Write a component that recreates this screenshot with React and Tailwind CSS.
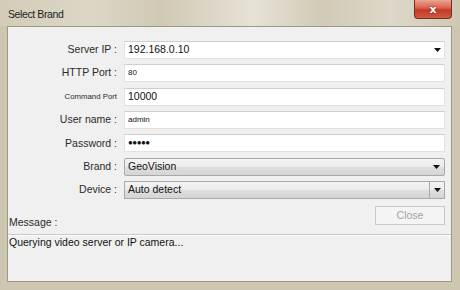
import React from "react";

const Arrow = () => (
  <svg width="7" height="4" viewBox="0 0 7 4" className="block">
    <path d="M0 0H7L3.5 4Z" fill="#111" />
  </svg>
);

function Label({ children, small }) {
  return (
    <div
      className={
        "flex items-center justify-end pr-[1px] text-[#2a2a2a] whitespace-nowrap " +
        (small ? "text-[7.8px]" : "text-[10.5px]")
      }
    >
      {children}
    </div>
  );
}

function TextBox({ value, small }) {
  return (
    <div
      className={
        "h-[18px] bg-white border border-[#e2e2e2] border-t-[#cfcfcf] flex items-center pl-[3px] text-[#111] " +
        (small ? "text-[8px]" : "text-[10.5px]")
      }
    >
      {value}
    </div>
  );
}

const grad =
  "bg-[linear-gradient(180deg,#f3f3f3_0%,#ebebeb_50%,#dedede_51%,#d5d5d5_100%)]";

export default function App() {
  return (
    <div
      className="w-[460px] h-[290px] relative overflow-hidden flex flex-col bg-[#cdc7b2]"
      style={{ fontFamily: '"Liberation Sans", Arial, sans-serif' }}
    >
      {/* title bar */}
      <div className="h-[26px] shrink-0 flex items-center pl-[8px] pt-[3px] bg-[linear-gradient(90deg,#d2ccb8_0%,#dcd7c7_20%,#cfc9b4_35%,#e6e2d6_55%,#d0cab6_70%,#ddd8c9_85%,#cec8b3_100%)]">
        <span className="text-[10.5px] tracking-[-0.4px] text-[#1d1d1d]">Select Brand</span>
      </div>
      {/* close X button */}
      <div className="absolute top-0 right-[8px] w-[38px] h-[19px] rounded-b-[4px] border border-t-0 border-[#7d2a1f] bg-[linear-gradient(180deg,#e9a493_0%,#d9604a_45%,#c23a26_55%,#cf5a43_100%)] flex items-center justify-center">
        <span
          className="text-white text-[11px] font-bold leading-none [text-shadow:0_0_2px_#6b1a10]"
          style={{ fontFamily: '"DejaVu Sans", sans-serif' }}
        >
          x
        </span>
      </div>

      {/* client area */}
      <div className="ml-[7px] mr-[8px] mb-[8px] flex-1 border border-[#9d9885] bg-[#f0f0f0] flex flex-col">
        <div className="pt-[14px] pr-[6px] grid grid-cols-[110px_1fr] gap-x-[6px] gap-y-[5.35px] auto-rows-[18px]">
          <Label>Server IP :</Label>
          <div className="h-[18px] bg-white border border-[#e2e2e2] border-t-[#cfcfcf] flex items-center pl-[3px] text-[10.5px] text-[#111]">
            <span className="flex-1">192.168.0.10</span>
            <span className="pr-[3px]"><Arrow /></span>
          </div>

          <Label>HTTP Port :</Label>
          <TextBox value="80" small />

          <Label small>Command Port</Label>
          <TextBox value="10000" />

          <Label>User name :</Label>
          <TextBox value="admin" small />

          <Label>Password :</Label>
          <div className="h-[18px] bg-white border border-[#e2e2e2] border-t-[#cfcfcf] flex items-center pl-[3px] text-[8px] font-bold text-[#111] tracking-[-0.5px]">
            ●●●●●
          </div>

          <Label>Brand :</Label>
          <div className={"h-[18px] rounded-[2px] border border-[#a9a9a9] flex items-center pl-[3px] text-[10.5px] text-[#111] " + grad}>
            <span className="flex-1">GeoVision</span>
            <span className="pr-[4px]"><Arrow /></span>
          </div>

          <Label>Device :</Label>
          <div className="h-[18px] flex border border-[#a9a9a9] bg-white">
            <div className={"flex-1 border-r border-[#a9a9a9] flex items-center pl-[3px] text-[10.5px] text-[#111] " + grad}>
              Auto detect
            </div>
            <div className={"w-[14px] flex items-center justify-center " + grad}>
              <Arrow />
            </div>
          </div>
        </div>

        <div className="flex justify-end mt-[7px] pr-[6px]">
          <div className="w-[70px] h-[19px] border border-[#c9c9c9] bg-[#f4f4f4] flex items-center justify-center text-[10.5px] text-[#a3a3a3]">
            Close
          </div>
        </div>
        <div className="-mt-[10px] pl-[1px] text-[10.5px] text-[#2a2a2a] leading-[14px]">Message :</div>

        <div className="mt-[5px] border-t border-[#c8c8c8] shadow-[inset_0_1px_0_#ffffff] flex-1 bg-[#f0f0f0] pl-[1px] text-[10.5px] leading-[14px] text-[#111]">
          Querying video server or IP camera...
        </div>
      </div>
    </div>
  );
}
